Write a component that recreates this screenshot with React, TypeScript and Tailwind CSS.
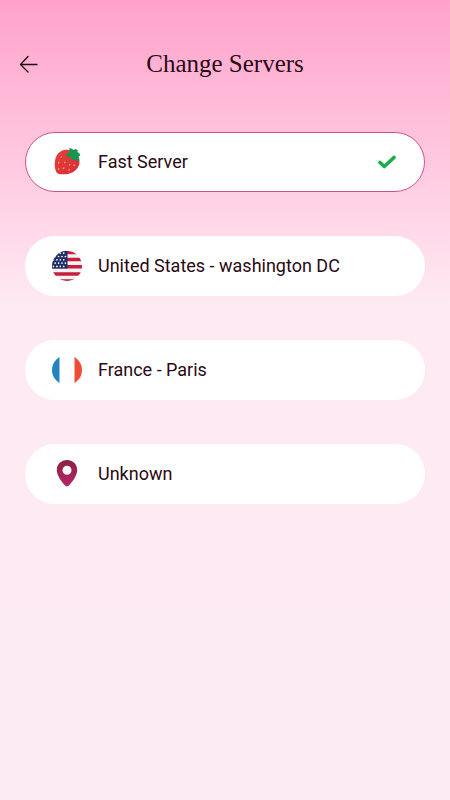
import { useState } from "react";
import type { ReactNode } from "react";

type Server = {
  id: string;
  name: string;
  icon: ReactNode;
};

const STARS = [0, 1, 2, 3, 4].flatMap((row) =>
  [0, 1, 2, 3, 4].map((col) => ({
    x: 1.5 + col * 3.4 + (row % 2) * 1.7,
    y: 2.2 + row * 3.3,
  }))
);

function StrawberryIcon() {
  return (
    <svg viewBox="0 0 30 30" className="size-[30px]" aria-hidden="true">
      <defs>
        <linearGradient id="berry" x1="0" y1="0" x2="1" y2="1">
          <stop offset="0" stopColor="#e6403c" />
          <stop offset="1" stopColor="#d92b3c" />
        </linearGradient>
      </defs>
      <path
        d="M14 2.800C8.800 3 4.700 6.800 3.300 12.200c-1.100 4.300-.6 9.200.8 12.400.6 1.500 1.500 2.200 3 2.400 4.300.6 9.300.3 13.200-1.600 4.700-2.300 7.400-6.600 7.200-11.400C27.300 8 21.500 2.500 14 2.800Z"
        fill="url(#berry)"
      />
      <path
        d="M17 1.200c1.800-.2 3.300.5 4.200 1.600 1.600-1 3.300-.8 4.700.1-.6 1.100-.5 1.900 0 2.700 1.300.3 2.200 1.400 2.300 2.900-1.100.2-1.500.8-1.600 1.700.8 1.300.8 2.800.2 4.200-1.400-.4-2.200-1-2.800-1.900-1.400.9-3 .8-4.300-.1.100-1.100-.1-1.800-.6-2.300-2.200.5-4.300-.2-5.500-2 1.400-.5 2.200-1.200 2.700-2.300.9-.7 1.300-1.300 1.400-2.200-.1-.9-.3-1.600-.7-2.400Z"
        fill="#17964f"
      />
      <g stroke="#f8a33a" strokeWidth="1.400" strokeLinecap="round">
        <path d="M9.500 9.500l-.4.700M6.800 15.300l-.2.800M13 15l-.4.700M6.800 21.500l-.2.800M11.800 20.800l-.3.800M17.800 17.300l-.4.700M17.300 22.600l-.4.600M22.500 18l-.5.500" />
      </g>
    </svg>
  );
}

function UsaIcon() {
  return (
    <svg viewBox="0 0 30 30" className="size-[30px]" aria-hidden="true">
      <clipPath id="usa">
        <circle cx="15" cy="15" r="15" />
      </clipPath>
      <g clipPath="url(#usa)">
        <rect width="30" height="30" fill="#f6f2f4" />
        <path
          d="M0 1.500h30M0 8.600h30M0 15.700h30M0 22.900h30M0 30h30"
          stroke="#c51f3a"
          strokeWidth="3.500"
        />
        <rect width="15.500" height="17.500" fill="#1d2f68" />
        {STARS.filter((s) => s.x < 15).map((s) => (
          <circle key={`${s.x}-${s.y}`} cx={s.x} cy={s.y} r="0.850" fill="#fff" />
        ))}
      </g>
    </svg>
  );
}

function FranceIcon() {
  return (
    <svg viewBox="0 0 30 30" className="size-[30px]" aria-hidden="true">
      <clipPath id="france">
        <circle cx="15" cy="15" r="15" />
      </clipPath>
      <g clipPath="url(#france)">
        <rect width="30" height="30" fill="#fff" />
        <rect width="7.500" height="30" fill="#2484c1" />
        <rect x="22.500" width="7.500" height="30" fill="#ee4c36" />
      </g>
    </svg>
  );
}

function PinIcon() {
  return (
    <svg viewBox="0 0 30 30" className="size-[30px]" aria-hidden="true">
      <defs>
        <linearGradient id="pin" x1="0" y1="0" x2="0" y2="1">
          <stop offset="0" stopColor="#8a2340" />
          <stop offset="1" stopColor="#b8246f" />
        </linearGradient>
      </defs>
      <path
        fillRule="evenodd"
        d="M15 1C9.300 1 4.800 5.300 4.800 10.900c0 5.400 4.600 11.700 8.600 15.800.9.900 2.300.9 3.200 0 4-4.100 8.600-10.400 8.600-15.800C25.200 5.300 20.700 1 15 1Zm0 5.700a4.500 4.500 0 1 1 0 9 4.500 4.500 0 0 1 0-9Z"
        fill="url(#pin)"
      />
    </svg>
  );
}

const SERVERS: Server[] = [
  { id: "fast", name: "Fast Server", icon: <StrawberryIcon /> },
  { id: "us", name: "United States - washington DC", icon: <UsaIcon /> },
  { id: "fr", name: "France - Paris", icon: <FranceIcon /> },
  { id: "unknown", name: "Unknown", icon: <PinIcon /> },
];

export default function App() {
  const [selected, setSelected] = useState("fast");

  return (
    <main className="min-h-screen bg-linear-to-b from-[#ffa2cb] via-[#fdeaf3] via-38% to-[#fdebf3] font-['Roboto',sans-serif] text-[#2a0a14]">
      <header className="grid grid-cols-[40px_1fr_40px] items-center px-2 pt-11">
        <button type="button" aria-label="Back" className="flex size-10 items-center justify-center">
          <svg viewBox="0 0 20 18" className="h-[18px] w-5" fill="none" stroke="#1c0a10" strokeWidth="1.300" strokeLinecap="round" strokeLinejoin="round">
            <path d="M19 9.500H2.500M10 1.500L2.500 9.500l7.500 7.500" />
          </svg>
        </button>
        <h1 className="text-center font-['Liberation_Serif',serif] text-[25px] leading-8">Change Servers</h1>
      </header>

      <div role="radiogroup" aria-label="Servers" className="flex flex-col gap-11 px-[25px] pt-12 pb-10">
        {SERVERS.map((server) => (
          <label
            key={server.id}
            className="flex h-[60px] cursor-pointer items-center gap-4 rounded-full border border-transparent bg-white pr-[27px] pl-[26px] has-checked:border-[#cf4f8f]"
          >
            <input
              type="radio"
              name="server"
              value={server.id}
              checked={selected === server.id}
              onChange={() => setSelected(server.id)}
              className="sr-only"
            />
            {server.icon}
            <span className="flex-1 text-lg">{server.name}</span>
            {selected === server.id && (
              <svg viewBox="0 0 20 14" className="h-3.5 w-5" fill="none" aria-hidden="true">
                <path d="M3 7.500l4.300 4L17 2.500" stroke="#1aab4b" strokeWidth="3.600" strokeLinecap="round" strokeLinejoin="round" />
              </svg>
            )}
          </label>
        ))}
      </div>
    </main>
  );
}
